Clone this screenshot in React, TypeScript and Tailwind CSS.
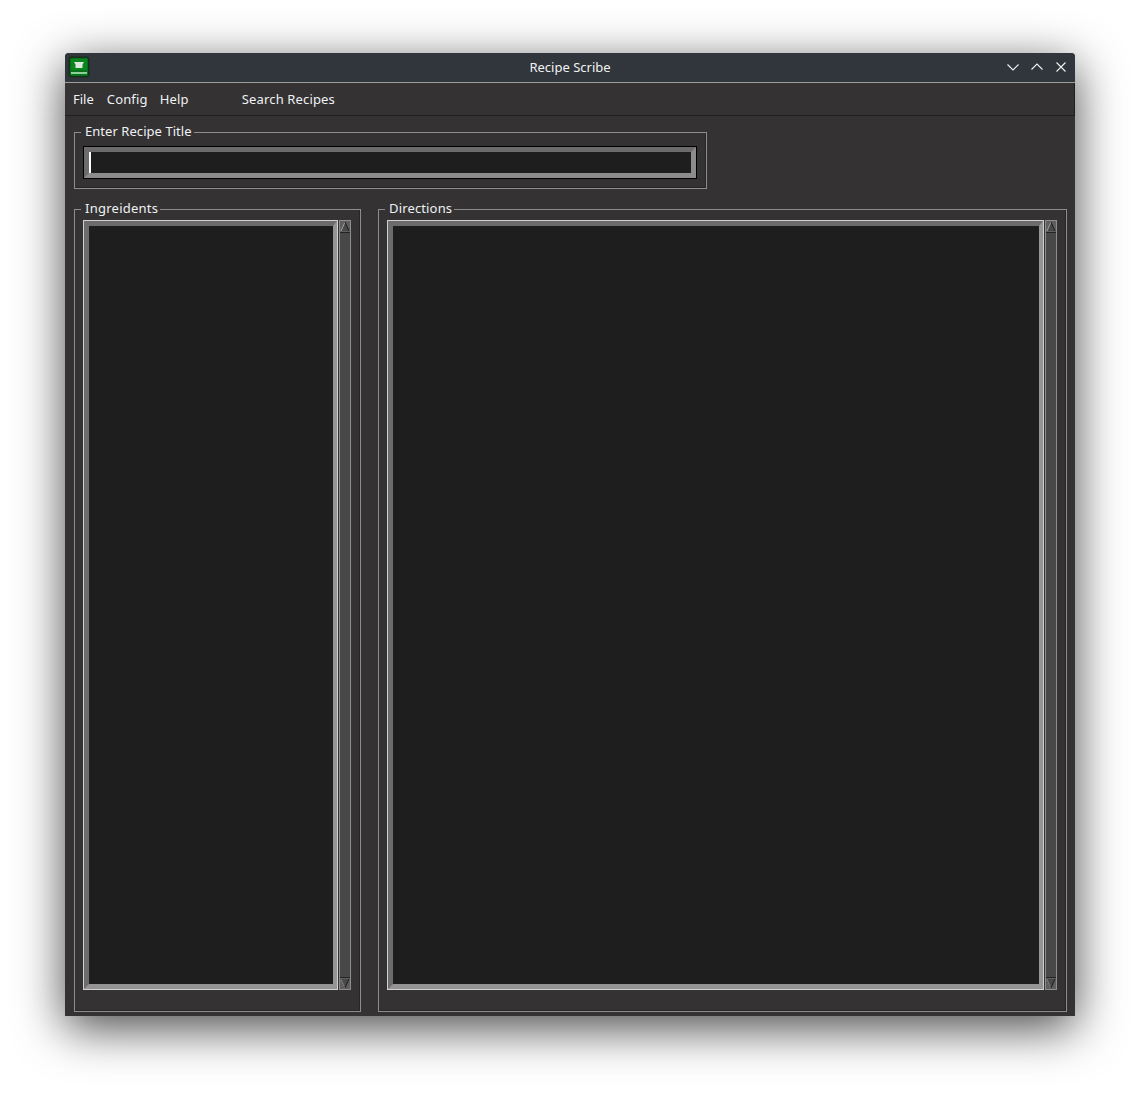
const uiFont = { fontFamily: '"Noto Sans", sans-serif' };

function AppIcon() {
  return (
    <svg width="22" height="22" viewBox="0 0 22 22" className="block">
      <rect x="0.5" y="0.5" width="21" height="21" rx="3" fill="#16301b" />
      <rect x="2" y="2" width="18" height="18" rx="1.5" fill="#08701a" />
      <rect x="3" y="3" width="16" height="11" fill="#0a861c" />
      <path d="M6 6h10l-1.5 2.500V12h-7V8.500z" fill="#dce8dc" />
      <rect x="3" y="16" width="16" height="2" fill="#8fcf98" />
    </svg>
  );
}

function WindowButtons() {
  return (
    <div className="absolute right-[8px] top-[8px] flex gap-[12px]">
      <svg width="12" height="12" viewBox="0 0 12 12" fill="none" stroke="#f0f2f2" strokeWidth="1.1">
        <path d="M0.5 3.5 6 9l5.5-5.5" />
      </svg>
      <svg width="12" height="12" viewBox="0 0 12 12" fill="none" stroke="#f0f2f2" strokeWidth="1.1">
        <path d="M0.5 8.5 6 3l5.5 5.5" />
      </svg>
      <svg width="12" height="12" viewBox="0 0 12 12" fill="none" stroke="#f0f2f2" strokeWidth="1.1">
        <path d="M1.5 1.5l9 9M10.500 1.500l-9 9" />
      </svg>
    </div>
  );
}

function Scrollbar() {
  return (
    <div className="ml-[1px] flex w-[12px] shrink-0 flex-col border-x border-[#8e8e8e] bg-[#484848]">
      <div className="h-[13px] shrink-0 border-y border-t-[#8e8e8e] border-b-[#242424] bg-[#5e5e5e]">
        <svg width="10" height="11" viewBox="0 0 10 11" className="block">
          <path d="M5 1 9 10H1z" fill="#484848" />
          <path d="M5 1 1 10" stroke="#a0a0a0" fill="none" />
          <path d="M5 1 9 10" stroke="#1c1c1c" fill="none" />
        </svg>
      </div>
      <div className="flex-1" />
      <div className="h-[13px] shrink-0 border-y border-t-[#242424] border-b-[#8e8e8e] bg-[#5e5e5e]">
        <svg width="10" height="11" viewBox="0 0 10 11" className="block">
          <path d="M5 10 9 1H1z" fill="#484848" />
          <path d="M5 10 1 1" stroke="#a0a0a0" strokeDasharray="1 1" fill="none" />
          <path d="M5 10 9 1" stroke="#1c1c1c" fill="none" />
        </svg>
      </div>
    </div>
  );
}

function TextPane() {
  return (
    <div className="flex-1 border border-[#d0d0d0]">
      <div className="h-full border-[5px] border-r-[4px] border-t-[#6c6c6c] border-l-[#6c6c6c] border-r-[#949494] border-b-[#949494] bg-[#1e1e1e]" />
    </div>
  );
}

function Group({ title, tracking, className, children }: { title: string; tracking: string; className: string; children: React.ReactNode }) {
  return (
    <fieldset className={`border border-[#8e8e8e] shadow-[inset_-1px_-1px_0_#262626] ${className}`}>
      <legend className={`ml-[-2px] pb-[2px] pl-[4px] pr-[2px] text-[13px] leading-[16px] text-[#eef1f3] ${tracking}`}>{title}</legend>
      {children}
    </fieldset>
  );
}

export default function App() {
  return (
    <div className="h-[1093px] w-[1140px] bg-white pl-[65px] pt-[53px]" style={uiFont}>
      <div className="flex h-[963px] w-[1010px] flex-col overflow-hidden rounded-t-[4px] bg-[#353233] shadow-[0_12px_48px_rgba(0,0,0,0.72)]">
        <div className="relative flex h-[30px] shrink-0 items-center justify-center border-b border-[#9b9e9f] bg-[#30363b] text-[13px] text-[#f0f2f2]">
          <div className="absolute left-[3px] top-[3px]">
            <AppIcon />
          </div>
          Recipe Scribe
          <WindowButtons />
        </div>
        <div className="flex h-[33px] shrink-0 items-center border-b border-r border-[#1f1f1f] pl-[8px] pt-[2px] text-[13px] text-[#eef1f3]">
          <span>File</span>
          <span className="ml-[13px] tracking-[0.15px]">Config</span>
          <span className="ml-[12px] tracking-[0.2px]">Help</span>
          <span className="ml-[53px] tracking-[0.15px]">Search Recipes</span>
        </div>
        <div className="flex min-h-0 flex-1 flex-col pb-[4px] pl-[9px] pr-[8px] pt-[7px]">
          <Group title="Enter Recipe Title" tracking="tracking-[0.05px]" className="w-[633px] shrink-0 pb-[9px] pl-[8px] pt-[5px]">
            <div className="h-[33px] w-[614px] border border-black">
              <div className="flex h-full items-center border-[5px] border-t-[#6c6c6c] border-l-[#6c6c6c] border-r-[#8c8c8c] border-b-[#8c8c8c] bg-[#1e1e1e]">
                <div className="h-[21px] w-[2px] bg-white" />
              </div>
            </div>
          </Group>
          <div className="mt-[11px] flex min-h-0 flex-1 gap-[17px]">
            <Group title="Ingreidents" tracking="tracking-[0.25px]" className="flex w-[287px] shrink-0 flex-col pb-[21px] pl-[8px] pr-[9px] pt-[2px]">
              <div className="flex min-h-0 flex-1">
                <TextPane />
                <Scrollbar />
              </div>
            </Group>
            <Group title="Directions" tracking="tracking-[0.15px]" className="flex flex-1 flex-col pb-[21px] pl-[8px] pr-[9px] pt-[2px]">
              <div className="flex min-h-0 flex-1">
                <TextPane />
                <Scrollbar />
              </div>
            </Group>
          </div>
        </div>
      </div>
    </div>
  );
}
